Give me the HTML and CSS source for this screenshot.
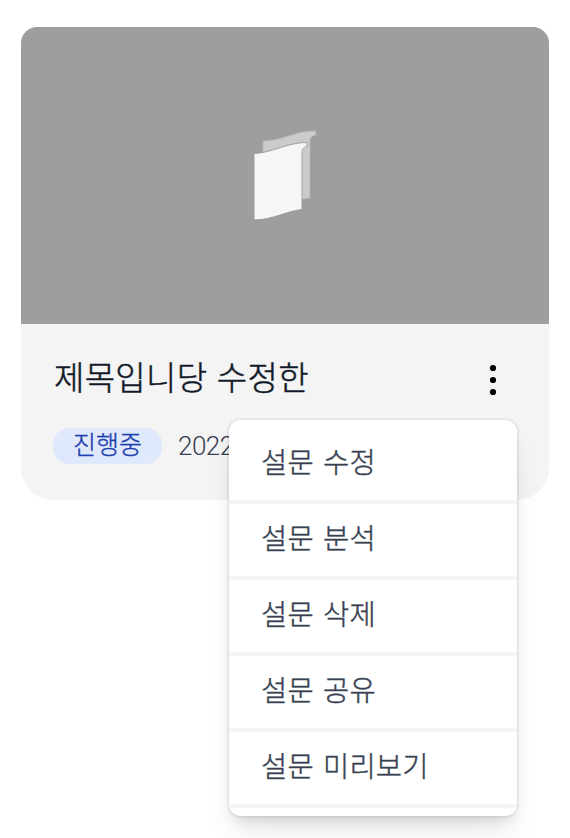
FILE: index.html
```html
<!DOCTYPE html>
<html lang="ko">
<head>
<meta charset="utf-8">
<title>설문</title>
<link rel="stylesheet" href="styles.css">
</head>
<body>
<article class="card">
  <div class="cover">
    <svg class="cover-icon" width="66" height="94" viewBox="0 0 66 94" aria-hidden="true">
      <path class="page-back" d="M11 13C30 13 44 2 64 3V7C60 8 58 9 58 14V70C54 71 49 71 45 71L11 76Z"/>
      <path class="page-front" d="M2 25.500C20 25 37 14 55 14.500V18.500C51 19.500 50 21 50 26V81.500C34 83 21 92 2 92Z"/>
    </svg>
  </div>
  <div class="body">
    <div class="heading">
      <h1 class="title">제목입니당 수정한</h1>
      <button class="more" aria-label="메뉴">
        <svg width="8" height="32" viewBox="0 0 8 32"><circle cx="4" cy="4" r="3.100"/><circle cx="4" cy="16" r="3.100"/><circle cx="4" cy="28" r="3.100"/></svg>
      </button>
    </div>
    <div class="meta">
      <span class="badge">진행중</span>
      <span class="date">2022</span>
    </div>
  </div>
  <ul class="menu">
    <li class="item">설문 수정</li>
    <li class="item">설문 분석</li>
    <li class="item">설문 삭제</li>
    <li class="item">설문 공유</li>
    <li class="item">설문 미리보기</li>
  </ul>
</article>
</body>
</html>
```
FILE: styles.css
```css
* { box-sizing: border-box; }
body {
  margin: 0;
  padding: 27px 21px 0;
  height: 838px;
  overflow: hidden;
  background: #fff;
  font-family: "Noto Sans CJK KR", sans-serif;
  font-weight: 300;
}
.card {
  position: relative;
  height: 473px;
  border-radius: 16px 16px 32px 32px;
  background: #f4f4f4;
}
.cover {
  display: flex;
  justify-content: center;
  height: 297px;
  padding-top: 101px;
  border-radius: 16px 16px 0 0;
  background: #9e9e9e;
}
.cover-icon { display: block; }
.page-back { fill: #cbcbcb; stroke: #b4b4b4; stroke-width: .6; }
.page-front { fill: #f6f6f6; stroke: #929292; stroke-width: .8; }
.body { padding: 32px 52px 0 33px; }
.heading { display: flex; justify-content: space-between; height: 48px; }
.title {
  margin: 0;
  color: #111827;
  font-size: 33px;
  font-weight: 300;
  line-height: 40px;
  letter-spacing: .3px;
  -webkit-text-stroke: .5px currentColor;
}
.more {
  width: 8px;
  height: 32px;
  margin-top: 8px;
  padding: 0;
  border: 0;
  background: none;
}
.more svg { display: block; }
.meta { display: flex; align-items: center; gap: 16px; margin: 24px 0 0 -1px; }
.badge {
  width: 109px;
  height: 36px;
  border-radius: 16px;
  background: #dfe9fb;
  color: #1e40af;
  font-size: 25px;
  line-height: 31px;
  text-align: center;
  -webkit-text-stroke: .4px currentColor;
}
.date {
  color: #374151;
  font-family: Roboto, sans-serif;
  font-size: 26px;
  line-height: 32px;
  letter-spacing: -.5px;
}
.menu {
  position: absolute;
  top: 393px;
  left: 208px;
  width: 288px;
  height: 396px;
  margin: 0;
  padding: 8px 0;
  list-style: none;
  border-radius: 12px;
  background: #fff;
  box-shadow: 0 0 0 2px rgba(0,0,0,.05), 0 20px 30px -6px rgba(0,0,0,.1), 0 8px 12px -4px rgba(0,0,0,.1);
}
.item {
  height: 76px;
  padding-left: 32px;
  border-bottom: 4px solid #f3f4f6;
  color: #374151;
  font-size: 28.5px;
  line-height: 66px;
  letter-spacing: .2px;
  word-spacing: 1px;
  -webkit-text-stroke: .4px currentColor;
}
```
